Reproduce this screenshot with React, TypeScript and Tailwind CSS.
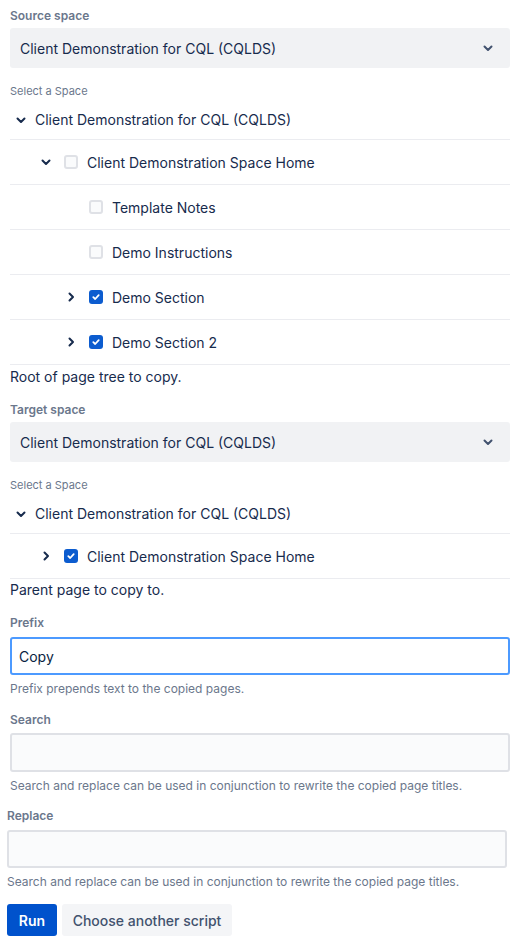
import type { ReactNode } from 'react';

type Node = {
  label: string;
  depth: number;
  toggle?: 'open' | 'closed';
  checked?: boolean;
  hasCheckbox?: boolean;
};

const sourceTree: Node[] = [
  { label: 'Client Demonstration Space Home', depth: 1, toggle: 'open', hasCheckbox: true },
  { label: 'Template Notes', depth: 2, hasCheckbox: true },
  { label: 'Demo Instructions', depth: 2, hasCheckbox: true },
  { label: 'Demo Section', depth: 2, toggle: 'closed', hasCheckbox: true, checked: true },
  { label: 'Demo Section 2', depth: 2, toggle: 'closed', hasCheckbox: true, checked: true },
];

const targetTree: Node[] = [
  { label: 'Client Demonstration Space Home', depth: 1, toggle: 'closed', hasCheckbox: true, checked: true },
];

function ChevronDown({ className = '' }: { className?: string }) {
  return (
    <svg width="16" height="16" viewBox="0 0 16 16" className={className}>
      <path d="M4.5 6.5 8 10l3.5-3.5" fill="none" stroke="currentColor" strokeWidth="2" strokeLinecap="round" strokeLinejoin="round" />
    </svg>
  );
}

function ChevronRight({ className = '' }: { className?: string }) {
  return (
    <svg width="16" height="16" viewBox="0 0 16 16" className={className}>
      <path d="M6.5 4.5 10 8l-3.5 3.5" fill="none" stroke="currentColor" strokeWidth="2" strokeLinecap="round" strokeLinejoin="round" />
    </svg>
  );
}

function Checkbox({ checked }: { checked?: boolean }) {
  if (checked) {
    return (
      <span className="ml-[7px] flex h-[14px] w-[14px] shrink-0 items-center justify-center rounded-[3px] bg-[#0c5ccf]">
        <svg width="10" height="10" viewBox="0 0 10 10">
          <path d="M2.3 5.2 4.2 7l3.5-3.8" fill="none" stroke="white" strokeWidth="1.8" strokeLinecap="round" strokeLinejoin="round" />
        </svg>
      </span>
    );
  }
  return <span className="ml-[7px] h-[14px] w-[14px] shrink-0 rounded-[3px] border-2 border-[#dfe1e6] bg-[#fafbfc]" />;
}

function TreeRow({ node }: { node: Node }) {
  const pad = node.depth === 1 ? 'pl-[25px]' : 'pl-[50px]';
  return (
    <div className={`flex h-[45px] items-center border-b border-[#ebecf0] ${pad}`}>
      <span className="flex w-[22px] shrink-0 items-center justify-center text-[#172b4d]">
        {node.toggle === 'open' && <ChevronDown />}
        {node.toggle === 'closed' && <ChevronRight />}
      </span>
      {node.hasCheckbox && <Checkbox checked={node.checked} />}
      <span className="ml-[9px] text-[14px] text-[#172b4d]">{node.label}</span>
    </div>
  );
}

function SpacePicker({ nodes }: { nodes: Node[] }) {
  return (
    <div>
      <div className="mt-4 text-[11px] leading-[14px] text-[#6b778c]">Select a Space</div>
      <div className="mt-[2px] flex h-10 items-center border-b border-[#ebecf0]">
        <span className="flex w-[22px] items-center justify-center text-[#172b4d]">
          <ChevronDown />
        </span>
        <span className="ml-[3px] text-[14px] text-[#172b4d]">Client Demonstration for CQL (CQLDS)</span>
      </div>
      {nodes.map((n) => (
        <TreeRow key={n.label} node={n} />
      ))}
    </div>
  );
}

function Label({ children, className = '' }: { children: ReactNode; className?: string }) {
  return <div className={`text-[12px] font-semibold leading-4 text-[#6b778c] ${className}`}>{children}</div>;
}

function SpaceSelect() {
  return (
    <div className="mt-1 flex h-10 items-center justify-between rounded-[3px] bg-[#f1f2f4] pl-[10px] pr-[14px]">
      <span className="text-[14px] text-[#172b4d]">Client Demonstration for CQL (CQLDS)</span>
      <ChevronDown className="text-[#42526e]" />
    </div>
  );
}

function Helper({ children }: { children: ReactNode }) {
  return <div className="mt-[6px] text-[12px] leading-4 text-[#6b778c]">{children}</div>;
}

export default function App() {
  return (
    <div className="min-h-screen w-[518px] bg-white font-['Inter',sans-serif] text-[#172b4d] antialiased">
      <div className="ml-[10px] w-[500px] pt-2">
        <Label>Source space</Label>
        <SpaceSelect />
        <SpacePicker nodes={sourceTree} />
        <div className="mt-[2px] text-[14px] leading-5">Root of page tree to copy.</div>

        <Label className="mt-[15px]">Target space</Label>
        <SpaceSelect />
        <SpacePicker nodes={targetTree} />
        <div className="mt-px text-[14px] leading-5">Parent page to copy to.</div>

        <Label className="mt-[15px]">Prefix</Label>
        <div className="mt-[6px] flex h-[38px] items-center rounded-[3px] border-2 border-[#4c9aff] bg-white px-[7px] text-[14px] text-[#091e42]">
          Copy
        </div>
        <Helper>Prefix prepends text to the copied pages.</Helper>

        <Label className="mt-[15px]">Search</Label>
        <div className="mt-[5px] h-[39px] rounded-[3px] border-2 border-[#dfe1e6] bg-[#fafbfc]" />
        <Helper>Search and replace can be used in conjunction to rewrite the copied page titles.</Helper>
      </div>

      <div className="ml-[7px] w-[500px]">
        <Label className="mt-[14px]">Replace</Label>
        <div className="mt-[6px] h-[38px] rounded-[3px] border-2 border-[#dfe1e6] bg-[#fafbfc]" />
        <Helper>Search and replace can be used in conjunction to rewrite the copied page titles.</Helper>

        <div className="mt-[14px] flex gap-[5px]">
          <button className="h-8 w-[50px] rounded-[3px] bg-[#0052cc] text-[14px] font-semibold text-white">Run</button>
          <button className="h-8 w-[170px] rounded-[3px] bg-[#f4f5f7] text-[14px] font-medium text-[#42526e]">
            Choose another script
          </button>
        </div>
      </div>
    </div>
  );
}
